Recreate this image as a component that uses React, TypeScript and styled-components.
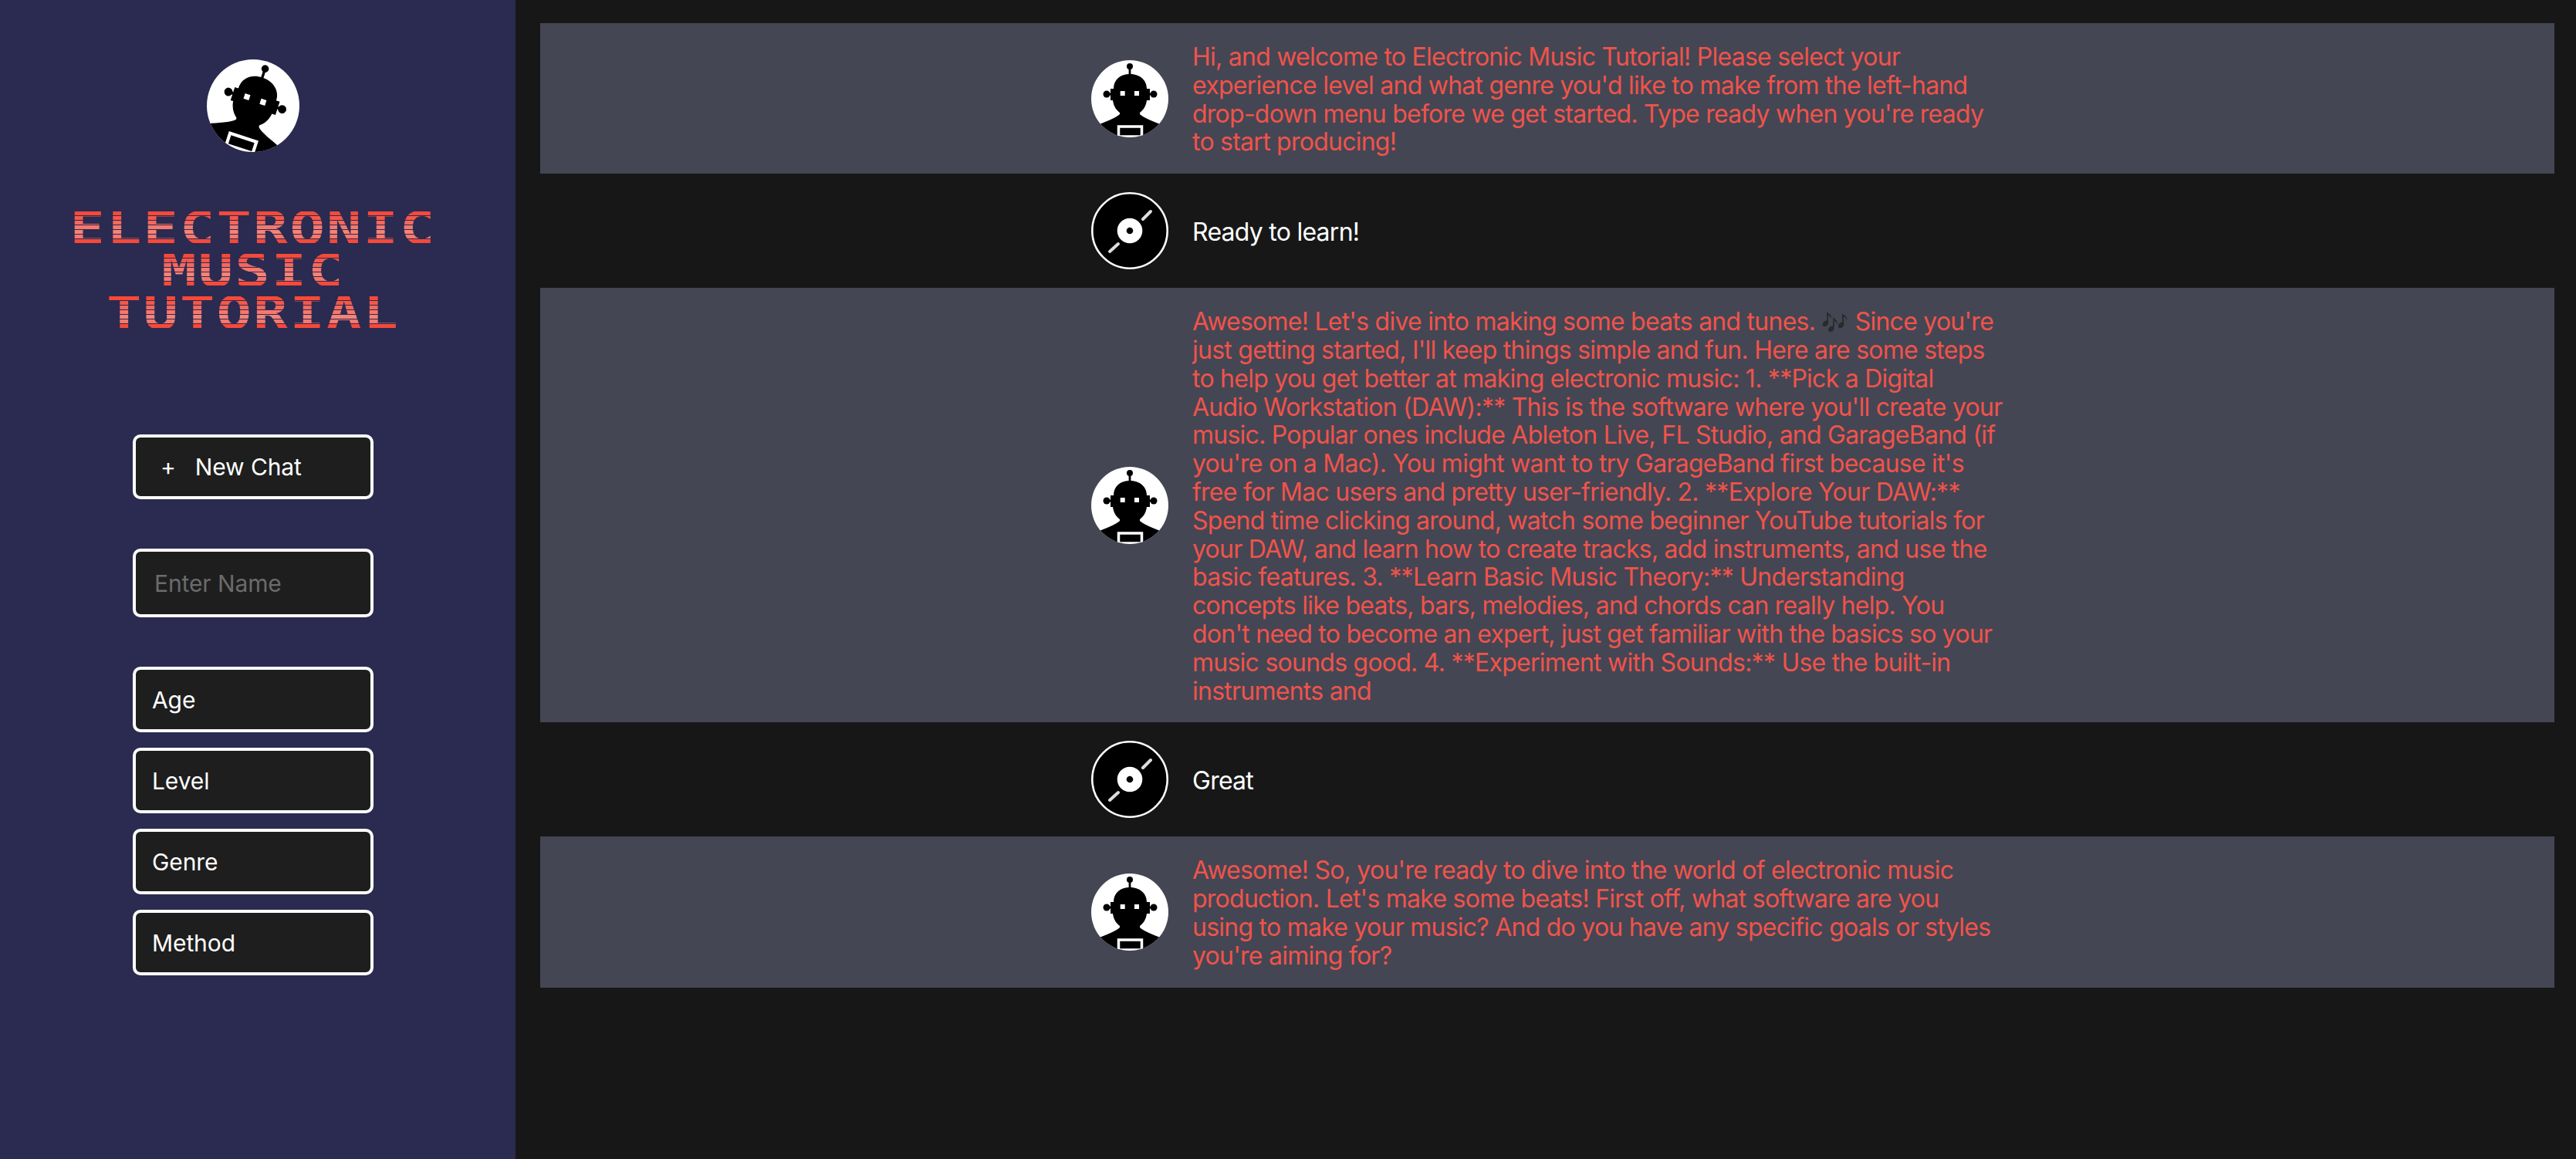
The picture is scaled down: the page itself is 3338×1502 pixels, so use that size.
import React from "react";
import styled, { createGlobalStyle } from "styled-components";

const GlobalStyle = createGlobalStyle`
  html, body { margin: 0; padding: 0; height: 100%; background: #171717; }
  #root { height: 100%; }
  * { box-sizing: border-box; }
`;

const scanlines = (() => {
  const colors = ["#f5493a", "#f5584b", "#f5685c", "#f5786e", "#f58378", "#f5786c", "#f5493a"];
  const stops: string[] = [];
  colors.forEach((c, i) => {
    const top = 5 + i * 6;
    stops.push(`transparent ${top}px`, `${c} ${top}px`, `${c} ${top + 5}px`, `transparent ${top + 5}px`);
  });
  return `linear-gradient(180deg, ${stops.join(", ")}, transparent 100%)`;
})();

const Page = styled.div`
  display: flex;
  width: 3338px;
  height: 1502px;
  overflow: hidden;
  background: #171717;
  font-family: Inter, "Noto Sans", sans-serif;
`;

const Sidebar = styled.aside`
  flex: 0 0 668px;
  display: flex;
  flex-direction: column;
  align-items: center;
  padding: 77px 12px 0 0;
  background: #2b2a50;
`;

const Title = styled.h1`
  margin: 72px 0 0;
  width: 100%;
  font-weight: 400;
`;

const TitleLine = styled.span`
  display: block;
  height: 55px;
  font-family: "DejaVu Sans Mono", monospace;
  font-weight: 700;
  font-size: 58px;
  line-height: 55px;
  letter-spacing: 1.6px;
  text-align: center;
  white-space: nowrap;
  color: transparent;
  background-image: ${scanlines};
  -webkit-background-clip: text;
  background-clip: text;
  transform: scaleX(1.3);
`;

const Control = styled.div<{ $top?: number }>`
  display: flex;
  align-items: center;
  width: 312px;
  height: 85px;
  margin-top: ${(p) => p.$top ?? 20}px;
  padding-left: 21px;
  background: #1e1e1e;
  border: 4px solid #fff;
  border-radius: 10px;
  color: #fff;
  font-size: 30px;
  letter-spacing: -0.1px;
`;

const NewChat = styled(Control)`
  height: 84px;
  padding-left: 32px;
  gap: 25px;
`;

const NameField = styled(Control)`
  height: 89px;
  padding-left: 24px;
  color: #6b6b6b;
`;

const Feed = styled.main`
  flex: 1;
  display: flex;
  flex-direction: column;
  padding: 30px 28px 0 32px;
`;

const Row = styled.section<{ $bot?: boolean }>`
  display: flex;
  justify-content: center;
  padding: 24px 0;
  background: ${(p) => (p.$bot ? "#444654" : "transparent")};
`;

const Inner = styled.div`
  display: flex;
  align-items: center;
  gap: 31px;
  width: 1182px;
`;

const Message = styled.p<{ $bot?: boolean }>`
  flex: 0 0 1051px;
  margin: 0 0 -2px;
  padding-top: 2px;
  font-size: 32px;
  line-height: 36.8px;
  letter-spacing: -0.75px;
  color: ${(p) => (p.$bot ? "#f0534a" : "#fff")};
`;

const Emoji = styled.span`
  font-size: 28px;
  line-height: 1;
  letter-spacing: 0;
  filter: grayscale(1) brightness(0.4);
`;

const Avatar = styled.svg<{ $size: number }>`
  flex: 0 0 ${(p) => p.$size}px;
  width: ${(p) => p.$size}px;
  height: ${(p) => p.$size}px;
  display: block;
`;

const Robot = ({ size = 100, tilt = 0 }: { size?: number; tilt?: number }) => (
  <Avatar $size={size} viewBox="0 0 100 100">
    <defs>
      <clipPath id={`robot-clip-${size}`}>
        <circle cx="50" cy="50" r="50" />
      </clipPath>
    </defs>
    <circle cx="50" cy="50" r="50" fill="#fff" />
    <g clipPath={`url(#robot-clip-${size})`}>
      <g transform={`rotate(${tilt} 50 50)`}>
        <circle cx="50" cy="8" r="4" fill="#000" />
        <rect x="48.6" y="8" width="2.8" height="12" fill="#000" />
        <circle cx="20" cy="44" r="4.5" fill="#000" />
        <circle cx="81" cy="44" r="4.5" fill="#000" />
        <rect x="20" y="42.6" width="62" height="2.8" fill="#000" />
        <path
          d="M29 37 C29 25 38 18 50 18 C62 18 72 25 72 37 L76 37 L76 52 L72 52 C71 60 67 65 63 68 L63 70 C68 75 80 79 92 84 L92 110 L8 110 L8 84 C20 79 32 75 37 70 L37 68 C33 65 29 60 28 52 L25 52 L25 37 Z"
          fill="#000"
        />
        <rect x="37.7" y="40" width="6" height="6" fill="#fff" />
        <rect x="56" y="40" width="6" height="6" fill="#fff" />
        <rect x="35.5" y="86" width="30" height="13" fill="#000" stroke="#fff" strokeWidth="3.5" />
      </g>
    </g>
  </Avatar>
);

const Disc = () => (
  <Avatar $size={100} viewBox="0 0 100 100">
    <circle cx="50" cy="50" r="48.7" fill="#000" stroke="#fff" strokeWidth="2.6" />
    <circle cx="50" cy="50" r="16.3" fill="#fff" />
    <circle cx="50" cy="50" r="4.3" fill="#000" />
    <path d="M67 35 L77 25 M35 67 L24 77" stroke="#ddd" strokeWidth="4" strokeLinecap="round" />
  </Avatar>
);

const conversation: { bot: boolean; text: React.ReactNode }[] = [
  {
    bot: true,
    text: "Hi, and welcome to Electronic Music Tutorial! Please select your experience level and what genre you'd like to make from the left-hand drop-down menu before we get started. Type ready when you're ready to start producing!",
  },
  { bot: false, text: "Ready to learn!" },
  {
    bot: true,
    text: (
      <>
        Awesome! Let's dive into making some beats and tunes. <Emoji>🎶</Emoji> Since you're just getting started, I'll
        keep things simple and fun. Here are some steps to help you get better at making electronic music: 1. **Pick a
        Digital Audio Workstation (DAW):** This is the software where you'll create your music. Popular ones include
        Ableton Live, FL Studio, and GarageBand (if you're on a Mac). You might want to try GarageBand first because
        it's free for Mac users and pretty user-friendly. 2. **Explore Your DAW:** Spend time clicking around, watch
        some beginner YouTube tutorials for your DAW, and learn how to create tracks, add instruments, and use the basic
        features. 3. **Learn Basic Music Theory:** Understanding concepts like beats, bars, melodies, and chords can
        really help. You don't need to become an expert, just get familiar with the basics so your music sounds good. 4.
        **Experiment with Sounds:** Use the built-in instruments and
      </>
    ),
  },
  { bot: false, text: "Great" },
  {
    bot: true,
    text: "Awesome! So, you're ready to dive into the world of electronic music production. Let's make some beats! First off, what software are you using to make your music? And do you have any specific goals or styles you're aiming for?",
  },
];

export default function App() {
  return (
    <Page>
      <GlobalStyle />
      <Sidebar>
        <Robot size={120} tilt={18} />
        <Title>
          <TitleLine>ELECTRONIC</TitleLine>
          <TitleLine>MUSIC</TitleLine>
          <TitleLine>TUTORIAL</TitleLine>
        </Title>
        <NewChat $top={129}>
          <span>+</span>
          <span>New Chat</span>
        </NewChat>
        <NameField $top={64}>Enter Name</NameField>
        <Control $top={64}>Age</Control>
        <Control>Level</Control>
        <Control>Genre</Control>
        <Control>Method</Control>
      </Sidebar>
      <Feed>
        {conversation.map((m, i) => (
          <Row key={i} $bot={m.bot}>
            <Inner>
              {m.bot ? <Robot /> : <Disc />}
              <Message $bot={m.bot}>{m.text}</Message>
            </Inner>
          </Row>
        ))}
      </Feed>
    </Page>
  );
}
